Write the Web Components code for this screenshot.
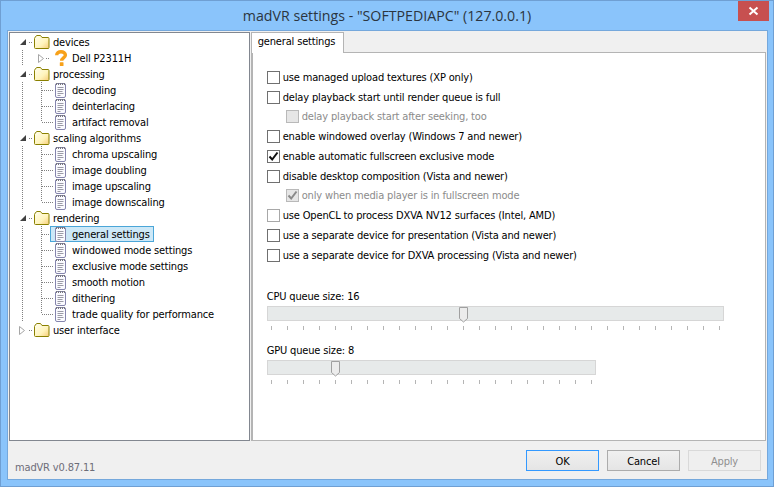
<!DOCTYPE html>
<html>
<head>
<meta charset="utf-8">
<title>madVR settings</title>
<style>
  html, body { margin: 0; padding: 0; background: #8ac4fb; }
  body { font: 11px "DejaVu Sans", Tahoma, sans-serif; font-stretch: condensed; letter-spacing: -0.16px; color: #000; }
</style>
</head>
<body>
<mad-window title-text='madVR settings - "SOFTPEDIAPC" (127.0.0.1)'>
  <mad-tree slot="tree">
    <tree-row kind="folder" exp="open">devices</tree-row>
    <tree-row kind="help" exp="closed" guide>Dell P2311H</tree-row>
    <tree-row kind="folder" exp="open">processing</tree-row>
    <tree-row kind="note" guide>decoding</tree-row>
    <tree-row kind="note" guide>deinterlacing</tree-row>
    <tree-row kind="note" guide last>artifact removal</tree-row>
    <tree-row kind="folder" exp="open">scaling algorithms</tree-row>
    <tree-row kind="note" guide>chroma upscaling</tree-row>
    <tree-row kind="note" guide>image doubling</tree-row>
    <tree-row kind="note" guide>image upscaling</tree-row>
    <tree-row kind="note" guide last>image downscaling</tree-row>
    <tree-row kind="folder" exp="open">rendering</tree-row>
    <tree-row kind="note" guide selected>general settings</tree-row>
    <tree-row kind="note" guide>windowed mode settings</tree-row>
    <tree-row kind="note" guide>exclusive mode settings</tree-row>
    <tree-row kind="note" guide>smooth motion</tree-row>
    <tree-row kind="note" guide>dithering</tree-row>
    <tree-row kind="note" guide last>trade quality for performance</tree-row>
    <tree-row kind="folder" exp="closed">user interface</tree-row>
  </mad-tree>
  <mad-tabs slot="panel" label="general settings">
    <mad-check>use managed upload textures (XP only)</mad-check>
    <mad-check>delay playback start until render queue is full</mad-check>
    <mad-check indent disabled>delay playback start after seeking, too</mad-check>
    <mad-check>enable windowed overlay (Windows 7 and newer)</mad-check>
    <mad-check checked>enable automatic fullscreen exclusive mode</mad-check>
    <mad-check>disable desktop composition (Vista and newer)</mad-check>
    <mad-check indent disabled checked>only when media player is in fullscreen mode</mad-check>
    <mad-check faded>use OpenCL to process DXVA NV12 surfaces (Intel, AMD)</mad-check>
    <mad-check>use a separate device for presentation (Vista and newer)</mad-check>
    <mad-check>use a separate device for DXVA processing (Vista and newer)</mad-check>
    <mad-slider label="CPU queue size: 16" ticks="29" thumb="191"></mad-slider>
    <mad-slider label="GPU queue size: 8" ticks="21" thumb="63"></mad-slider>
  </mad-tabs>
  <span slot="version">madVR v0.87.11</span>
  <mad-button slot="buttons" kind="default">OK</mad-button>
  <mad-button slot="buttons">Cancel</mad-button>
  <mad-button slot="buttons" kind="disabled">Apply</mad-button>
</mad-window>

<script>
// window frame: title bar, client area with tree + panel, footer
class MadWindow extends HTMLElement {
  constructor() {
    super();
    this.attachShadow({ mode: 'open' });
  }
  connectedCallback() {
    this.shadowRoot.innerHTML = `
      <style>
        :host { display: flex; flex-direction: column; box-sizing: border-box; width: 774px; height: 487px;
          border: 1px solid #6f9fd3; background: #8ac4fb; }
        .title { position: relative; height: 29px; display: flex; align-items: center; justify-content: center;
          font: 14.200px "Open Sans", sans-serif; letter-spacing: 0; color: #2b3540; flex: none; }
        .close { position: absolute; top: 0; right: 4px; width: 31px; height: 20px; background: #c75050;
          display: flex; align-items: center; justify-content: center; }
        .client { margin: 0 5px 0 6px; box-sizing: border-box; height: 450px; border: 1px solid #75a8dc;
          background: #f0f0f0; display: flex; flex-direction: column; padding: 1px 1px 0 1px; }
        .main { display: flex; gap: 1px; height: 409px; }
        .foot { flex: 1; display: flex; align-items: flex-start; justify-content: space-between; padding: 9px 5px 0 6px; }
        .version { margin-top: 11px; color: #6d6d78; }
        .buttons { display: flex; gap: 8px; }
      </style>
      <div class="title">
        <span>${this.getAttribute('title-text')}</span>
        <div class="close">
          <svg width="11" height="10" viewBox="0 0 11 10"><path d="M1.500 1.500l8 7M9.500 1.500l-8 7" stroke="#fff" stroke-width="2" fill="none"/></svg>
        </div>
      </div>
      <div class="client">
        <div class="main"><slot name="tree"></slot><slot name="panel"></slot></div>
        <div class="foot">
          <div class="version"><slot name="version"></slot></div>
          <div class="buttons"><slot name="buttons"></slot></div>
        </div>
      </div>`;
  }
}
customElements.define('mad-window', MadWindow);

class MadTree extends HTMLElement {
  constructor() {
    super();
    this.attachShadow({ mode: 'open' }).innerHTML = `
      <style>
        :host { display: block; box-sizing: border-box; width: 241px; height: 409px; background: #fff;
          border: 1px solid #828790; padding-top: 1px; }
      </style>
      <slot></slot>`;
  }
}
customElements.define('mad-tree', MadTree);

const TREE_ICONS = {
  folder: `<svg width="16" height="14" viewBox="0 0 16 14">
      <defs><linearGradient id="f" x1="0" y1="0" x2="1" y2="1"><stop offset="0" stop-color="#fffef0"/><stop offset=".6" stop-color="#fff4bc"/><stop offset="1" stop-color="#f6cc78"/></linearGradient></defs>
      <path d="M.5 3.500V12.500a1 1 0 0 0 1 1h13a1 1 0 0 0 .5-1V3.500a1 1 0 0 0-1-1H8L6.500.5H3L1.500 1.500z" fill="url(#f)" stroke="#8a8000"/>
    </svg>`,
  help: `<svg width="14" height="16" viewBox="0 0 14 16">
      <path d="M2.700 5.300C2.700 2.900 4.600 1.800 7 1.800s4.400 1.200 4.400 3.200c0 3-3.700 2.900-3.700 5.800" fill="none" stroke="#f7a11a" stroke-width="3.400"/>
      <rect x="5.800" y="12.300" width="3.700" height="3.700" rx=".5" fill="#f7a11a"/>
    </svg>`,
  note: `<svg width="13" height="16" viewBox="0 0 13 16">
      <rect x="1.500" y="1.500" width="10" height="14" rx="1.500" fill="#fbfbff" stroke="#8585ad"/>
      <path d="M2.500 1v2M4.500 1v2M6.500 1v2M8.500 1v2M10.500 1v2" stroke="#77777d" fill="none"/>
      <path d="M3.500 5.500h6M3.500 7.500h6M3.500 9.500h5M3.500 11.500h6M3.500 13.500h3" stroke="#9b9ba6" fill="none"/>
    </svg>`
};

class TreeRow extends HTMLElement {
  constructor() {
    super();
    this.attachShadow({ mode: 'open' });
  }
  connectedCallback() {
    const kind = this.getAttribute('kind');
    const exp = this.getAttribute('exp');
    const guide = this.hasAttribute('guide');
    const last = this.hasAttribute('last');
    const selected = this.hasAttribute('selected');
    const child = kind !== 'folder';

    // the x positions are relative to the tree's inside (x=10 on the page)
    let lines = '';
    const dot = 'stroke="#808080" stroke-dasharray="1 1" fill="none"';
    if (guide) lines += `<path d="M12.500 0V16" ${dot}/>`;
    if (child && !exp) {
      lines += `<path d="M31.500 0V${last ? 8 : 16}" ${dot}/><path d="M32 8.500H43" ${dot}/>`;
    }
    if (child && exp) lines += `<path d="M36 8.500H40" ${dot}/>`;
    if (!child) lines += `<path d="M19 8.500H23" ${dot}/>`;
    const ex = child ? 21 : 2;
    let arrow = '';
    if (exp === 'open') arrow = `<path d="M${ex + 14} 5V11H${ex + 8}z" fill="#404040"/>`;
    if (exp === 'closed') arrow = `<path d="M${ex + 7}.500 4.500L${ex + 12}.500 8.500L${ex + 7}.500 12.500z" fill="#fff" stroke="#a6a6a6"/>`;

    this.shadowRoot.innerHTML = `
      <style>
        :host { display: block; height: 16px; }
        .row { position: relative; display: flex; align-items: center; height: 16px; }
        .lines { position: absolute; left: 0; top: 0; }
        .icon { display: flex; margin-left: ${child ? 44 : 24}px; width: ${child ? 18 : 19}px; position: relative; }
        .label { white-space: nowrap; position: relative; }
        .sel { background: #cde8f7; outline: 1px solid #4ba6d8; outline-offset: -1px; position: absolute;
          left: 40px; top: 0; width: 104px; height: 16px; }
      </style>
      <div class="row">
        <svg class="lines" width="60" height="16">${lines}${arrow}</svg>
        ${selected ? '<div class="sel"></div>' : ''}
        <span class="icon">${TREE_ICONS[kind]}</span>
        <span class="label"><slot></slot></span>
      </div>`;
  }
}
customElements.define('tree-row', TreeRow);

// tab strip with one tab; content is slotted into the page below it
class MadTabs extends HTMLElement {
  constructor() {
    super();
    this.attachShadow({ mode: 'open' });
  }
  connectedCallback() {
    this.shadowRoot.innerHTML = `
      <style>
        :host { display: flex; flex-direction: column; width: 516px; height: 409px; box-sizing: border-box; }
        .strip { height: 20px; display: flex; flex: none; position: relative; z-index: 1; }
        .tab { box-sizing: border-box; width: 93px; height: 21px; background: #fff; border: 1px solid #b4b4b4;
          border-bottom: 0; padding: 2px 0 0 6px; }
        .page { flex: 1; background: #fff; border: 1px solid #b4b4b4; border-left-width: 2px; padding: 14.500px 0 0 14px;
          display: flex; flex-direction: column; }
      </style>
      <div class="strip"><div class="tab">${this.getAttribute('label')}</div></div>
      <div class="page"><slot></slot></div>`;
  }
}
customElements.define('mad-tabs', MadTabs);

class MadCheck extends HTMLElement {
  constructor() {
    super();
    this.attachShadow({ mode: 'open' });
  }
  connectedCallback() {
    const off = this.hasAttribute('disabled');
    const faded = this.hasAttribute('faded');
    const mark = this.hasAttribute('checked')
      ? `<svg width="11" height="11" viewBox="0 0 11 11"><path d="M1.500 5.500L4.200 8.500L9.500 1.500" fill="none" stroke="${off ? '#8a8a8a' : '#111'}" stroke-width="2"/></svg>`
      : '';
    this.shadowRoot.innerHTML = `
      <style>
        :host { display: flex; align-items: center; height: 19.750px; padding-left: ${this.hasAttribute('indent') ? 19 : 0}px;
          color: ${off ? '#8b8b8b' : '#000'}; white-space: nowrap; }
        .box { box-sizing: border-box; width: 13px; height: 13px; margin-right: 3px; flex: none;
          border: 1px solid ${off ? '#b9b9b9' : faded ? '#a8a8a8' : '#707070'}; background: ${off ? '#e6e6e6' : '#fff'};
          display: flex; align-items: center; justify-content: center; }
      </style>
      <span class="box">${mark}</span><slot></slot>`;
  }
}
customElements.define('mad-check', MadCheck);

class MadSlider extends HTMLElement {
  constructor() {
    super();
    this.attachShadow({ mode: 'open' });
  }
  connectedCallback() {
    const ticks = Number(this.getAttribute('ticks'));
    const thumb = Number(this.getAttribute('thumb'));
    const w = (ticks - 1) * 16 + 9;
    let marks = '';
    for (let i = 0; i < ticks; i++) marks += '<i></i>';
    this.shadowRoot.innerHTML = `
      <style>
        :host { display: block; width: ${w}px; margin-top: 12px; }
        :host(:first-of-type) { margin-top: 22.500px; }
        .label { box-sizing: border-box; height: 16px; line-height: 16px; padding-top: 1px; margin-bottom: 2px; white-space: nowrap; }
        .track { position: relative; box-sizing: border-box; height: 15px; background: #e7eaea; border: 1px solid #d6d6d6; }
        .thumb { position: absolute; left: ${thumb}px; top: 0; display: block; }
        .ticks { display: flex; gap: 15px; padding: 5px 0 0 4px; height: 4px; }
        .ticks i { display: block; width: 1px; height: 4px; background: #b5b5b5; }
      </style>
      <div class="label">${this.getAttribute('label')}</div>
      <div class="track">
        <svg class="thumb" width="10" height="16" viewBox="0 0 10 16"><path d="M.5.5H8.500V11.500L4.500 15L.5 11.500z" fill="#ececec" stroke="#a0a0a0"/></svg>
      </div>
      <div class="ticks">${marks}</div>`;
  }
}
customElements.define('mad-slider', MadSlider);

class MadButton extends HTMLElement {
  constructor() {
    super();
    this.attachShadow({ mode: 'open' });
  }
  connectedCallback() {
    const kind = this.getAttribute('kind');
    const border = kind === 'default' ? '#3399ff' : kind === 'disabled' ? '#d9d9d9' : '#acacac';
    this.shadowRoot.innerHTML = `
      <style>
        :host { display: flex; box-sizing: border-box; width: 73px; height: 21px; align-items: center; justify-content: center;
          padding-top: 1px; border: 1px solid ${border}; color: ${kind === 'disabled' ? '#8f8f8f' : '#000'};
          background: ${kind === 'disabled' ? '#efefef' : 'linear-gradient(#f0f0f0,#e5e5e5)'}; }
      </style>
      <slot></slot>`;
  }
}
customElements.define('mad-button', MadButton);
</script>
</body>
</html>
